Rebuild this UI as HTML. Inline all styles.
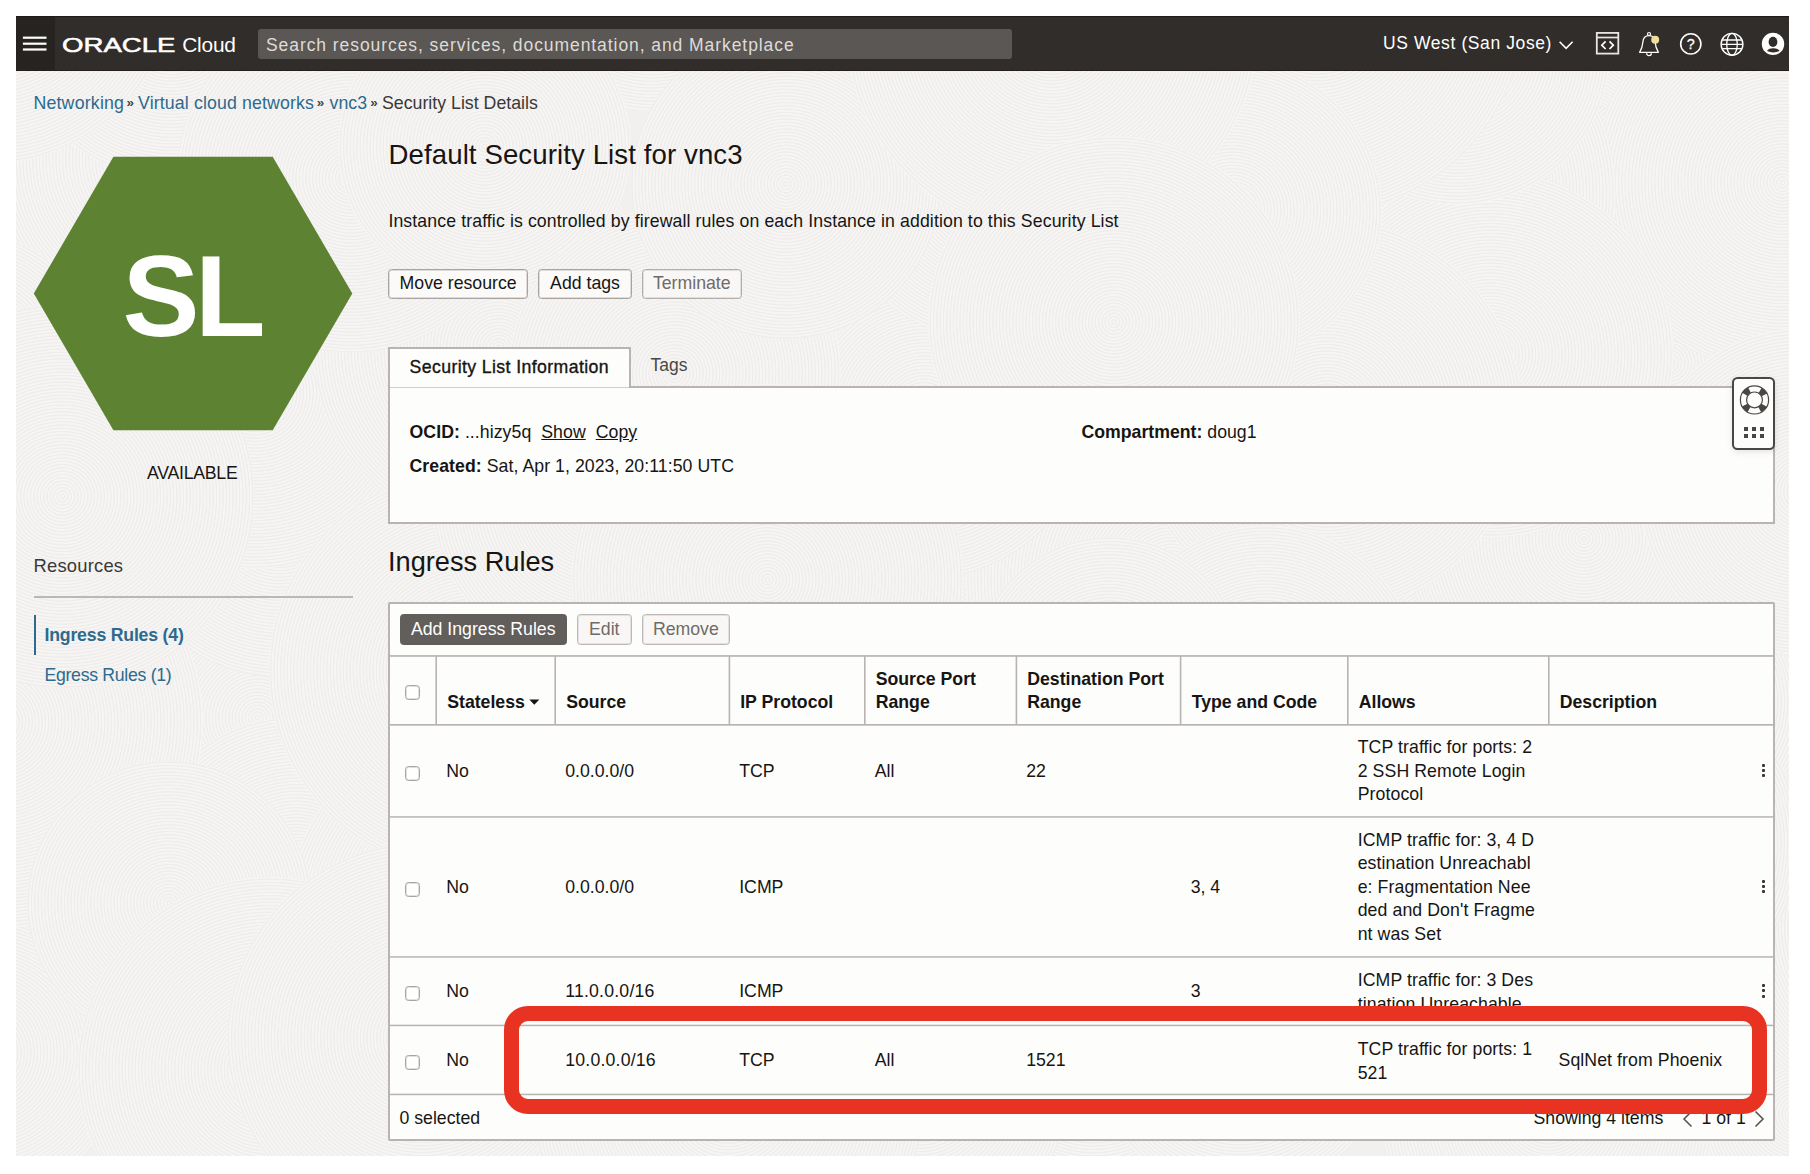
<!DOCTYPE html>
<html lang="en"><head><meta charset="utf-8"><title>Security List Details</title>
<style>
html,body{margin:0;padding:0;background:#fff}
body{width:1810px;height:1174px;position:relative;overflow:hidden;font-family:"Liberation Sans",Arial,sans-serif}
.t{position:absolute;line-height:1;white-space:nowrap}
.r{position:absolute}
b{font-weight:700}
.d{position:absolute;border-radius:50%;background:repeating-radial-gradient(circle at 50% 50%, rgba(255,255,255,.36) 0, rgba(255,255,255,.36) 1.2px, rgba(0,0,0,.012) 1.9px, rgba(0,0,0,.012) 2.6px, rgba(255,255,255,.36) 3.3px) #f1f0ee}
</style></head><body>
<div class="r " style="left:16px;top:16px;width:1773px;height:1140px;background:#f1f0ee;overflow:hidden"><div class="d" style="left:-32px;top:-33px;width:353px;height:353px"></div><div class="d" style="left:498px;top:-180px;width:275px;height:275px"></div><div class="d" style="left:1429px;top:-55px;width:417px;height:417px"></div><div class="d" style="left:1193px;top:344px;width:297px;height:297px"></div><div class="d" style="left:707px;top:552px;width:277px;height:277px"></div><div class="d" style="left:-177px;top:893px;width:287px;height:287px"></div><div class="d" style="left:1300px;top:508px;width:284px;height:284px"></div><div class="d" style="left:945px;top:903px;width:265px;height:265px"></div><div class="d" style="left:235px;top:-132px;width:266px;height:266px"></div><div class="d" style="left:1516px;top:-193px;width:309px;height:309px"></div><div class="d" style="left:-4px;top:-156px;width:319px;height:319px"></div><div class="d" style="left:848px;top:340px;width:326px;height:326px"></div><div class="d" style="left:62px;top:522px;width:359px;height:359px"></div><div class="d" style="left:121px;top:701px;width:318px;height:318px"></div><div class="d" style="left:1532px;top:554px;width:264px;height:264px"></div><div class="d" style="left:102px;top:338px;width:323px;height:323px"></div><div class="d" style="left:1510px;top:203px;width:287px;height:287px"></div><div class="d" style="left:1576px;top:-24px;width:381px;height:381px"></div><div class="d" style="left:1575px;top:892px;width:413px;height:413px"></div><div class="d" style="left:1311px;top:736px;width:283px;height:283px"></div><div class="d" style="left:1200px;top:-22px;width:400px;height:400px"></div><div class="d" style="left:268px;top:700px;width:419px;height:419px"></div><div class="d" style="left:63px;top:201px;width:352px;height:352px"></div><div class="d" style="left:253px;top:453px;width:404px;height:404px"></div><div class="d" style="left:297px;top:146px;width:371px;height:371px"></div><div class="d" style="left:756px;top:926px;width:296px;height:296px"></div><div class="d" style="left:-182px;top:216px;width:266px;height:266px"></div><div class="d" style="left:1391px;top:346px;width:354px;height:354px"></div><div class="d" style="left:1089px;top:709px;width:264px;height:264px"></div><div class="d" style="left:710px;top:-107px;width:280px;height:280px"></div><div class="d" style="left:949px;top:357px;width:413px;height:413px"></div><div class="d" style="left:161px;top:-12px;width:348px;height:348px"></div><div class="d" style="left:-225px;top:500px;width:412px;height:412px"></div><div class="d" style="left:1623px;top:312px;width:327px;height:327px"></div><div class="d" style="left:416px;top:317px;width:332px;height:332px"></div><div class="d" style="left:1291px;top:155px;width:367px;height:367px"></div><div class="d" style="left:11px;top:745px;width:284px;height:284px"></div><div class="d" style="left:61px;top:861px;width:385px;height:385px"></div><div class="d" style="left:-145px;top:289px;width:383px;height:383px"></div><div class="d" style="left:322px;top:-16px;width:293px;height:293px"></div><div class="d" style="left:753px;top:708px;width:302px;height:302px"></div><div class="d" style="left:211px;top:827px;width:390px;height:390px"></div><div class="d" style="left:1115px;top:204px;width:392px;height:392px"></div><div class="d" style="left:1288px;top:-117px;width:306px;height:306px"></div><div class="d" style="left:1092px;top:509px;width:314px;height:314px"></div><div class="d" style="left:1366px;top:930px;width:332px;height:332px"></div><div class="d" style="left:603px;top:737px;width:274px;height:274px"></div><div class="d" style="left:740px;top:227px;width:336px;height:336px"></div><div class="d" style="left:958px;top:521px;width:271px;height:271px"></div><div class="d" style="left:1701px;top:726px;width:371px;height:371px"></div><div class="d" style="left:-207px;top:-217px;width:364px;height:364px"></div><div class="d" style="left:1439px;top:655px;width:344px;height:344px"></div><div class="d" style="left:490px;top:544px;width:388px;height:388px"></div><div class="d" style="left:518px;top:891px;width:389px;height:389px"></div><div class="d" style="left:818px;top:16px;width:308px;height:308px"></div><div class="d" style="left:492px;top:191px;width:333px;height:333px"></div><div class="d" style="left:615px;top:13px;width:310px;height:310px"></div><div class="d" style="left:556px;top:368px;width:391px;height:391px"></div><div class="d" style="left:1073px;top:877px;width:301px;height:301px"></div><div class="d" style="left:1093px;top:-218px;width:416px;height:416px"></div><div class="d" style="left:1067px;top:45px;width:299px;height:299px"></div><div class="d" style="left:830px;top:-193px;width:412px;height:412px"></div><div class="d" style="left:912px;top:120px;width:372px;height:372px"></div></div>
<div class="r " style="left:16px;top:16px;width:1773px;height:55px;background:#312d2a;border-top:1px solid #1d1b19;border-bottom:1px solid #221f1d;box-sizing:border-box"></div>
<div class="r " style="left:16px;top:17px;width:39px;height:53px;background:#262320"></div>
<svg class="r" style="left:16px;top:16px" width="40" height="55" viewBox="0 0 40 55"><g fill="#fff"><rect x="6.9" y="20.6" width="23.6" height="2.2"/><rect x="6.9" y="26.6" width="23.6" height="2.2"/><rect x="6.9" y="32.4" width="23.6" height="2.2"/></g></svg>
<div class="t " style="left:62.30px;top:35.00px;font-size:20.6px;color:#fff;letter-spacing:0px;transform:translateY(0.4px) scaleX(1.34);transform-origin:0 0;font-weight:400;-webkit-text-stroke:0.55px #fff">ORACLE</div>
<div class="t " style="left:182.20px;top:35.00px;font-size:20.9px;color:#fff;letter-spacing:-0.2px">Cloud</div>
<div class="r " style="left:258px;top:29px;width:754px;height:30px;background:#5b5754;border-radius:3px"></div>
<div class="t " style="left:266.00px;top:37.00px;font-size:17.5px;color:#dedbd8;letter-spacing:0.93px">Search resources, services, documentation, and Marketplace</div>
<div class="t " style="left:1383.00px;top:35.00px;font-size:17.5px;color:#fff;letter-spacing:0.6px">US West (San Jose)</div>
<div class="t " style="left:33.40px;top:95.00px;font-size:17.75px;color:#2d6a8e;letter-spacing:0.2px">Networking</div>
<div class="t " style="left:126.60px;top:96.00px;font-size:13.5px;color:#444;font-weight:700">»</div>
<div class="t " style="left:138.00px;top:95.00px;font-size:17.75px;color:#2d6a8e;letter-spacing:0.12px">Virtual cloud networks</div>
<div class="t " style="left:316.80px;top:96.00px;font-size:13.5px;color:#444;font-weight:700">»</div>
<div class="t " style="left:329.60px;top:95.00px;font-size:17.75px;color:#2d6a8e">vnc3</div>
<div class="t " style="left:370.20px;top:96.00px;font-size:13.5px;color:#444;font-weight:700">»</div>
<div class="t " style="left:382.00px;top:95.00px;font-size:17.75px;color:#3a3836">Security List Details</div>
<svg class="r" style="left:33px;top:156px" width="321" height="276" viewBox="0 0 321 276"><polygon points="0.8,137.5 80.4,0.8 239.7,0.8 319.3,137.5 239.7,274.2 80.4,274.2" fill="#5c8232"/></svg>
<div class="t " style="left:122.50px;top:238.00px;font-size:115.5px;color:#fff;font-weight:700;letter-spacing:-4.5px">SL</div>
<div class="t " style="left:147.00px;top:465.00px;font-size:17.7px;color:#161513;letter-spacing:-0.25px">AVAILABLE</div>
<div class="t " style="left:388.50px;top:141.00px;font-size:27.6px;color:#161513;letter-spacing:0.1px">Default Security List for vnc3</div>
<div class="t " style="left:388.40px;top:213.00px;font-size:17.7px;color:#161513;letter-spacing:0.11px">Instance traffic is controlled by firewall rules on each Instance in addition to this Security List</div>
<div class="r " style="left:388.2px;top:269px;width:139.8px;height:29.8px;background:#fbfaf9;border:1px solid #a9a39f;border-radius:3.5px;box-sizing:border-box;box-shadow:inset 0 0 0 1px #a9a39f55"></div>
<div class="t" style="left:388.2px;top:269px;width:139.8px;height:29.8px;line-height:29.400000000000002px;text-align:center;font-size:17.7px;color:#161513">Move resource</div>
<div class="r " style="left:537.6px;top:269px;width:94.8px;height:29.8px;background:#fbfaf9;border:1px solid #a9a39f;border-radius:3.5px;box-sizing:border-box;box-shadow:inset 0 0 0 1px #a9a39f55"></div>
<div class="t" style="left:537.6px;top:269px;width:94.8px;height:29.8px;line-height:29.400000000000002px;text-align:center;font-size:17.7px;color:#161513">Add tags</div>
<div class="r " style="left:642px;top:269px;width:99.5px;height:29.8px;background:#f8f7f6;border:1px solid #b3aeab;border-radius:3.5px;box-sizing:border-box;box-shadow:inset 0 0 0 1px #b3aeab55"></div>
<div class="t" style="left:642px;top:269px;width:99.5px;height:29.8px;line-height:29.400000000000002px;text-align:center;font-size:17.7px;color:#6f6b68">Terminate</div>
<div class="r " style="left:388px;top:386px;width:1387px;height:138px;background:#fdfdfc;border:2px solid #b9b4b1;box-sizing:border-box"></div>
<div class="r " style="left:388px;top:347px;width:243px;height:41px;background:#fdfdfc;border:2px solid #b9b4b1;border-bottom:none;box-sizing:border-box"></div>
<div class="t " style="left:409.50px;top:359.00px;font-size:17.7px;color:#161513;-webkit-text-stroke:0.35px #161513;letter-spacing:0.39px">Security List Information</div>
<div class="r " style="left:390px;top:387px;width:239px;height:1px;background:#d2cecb"></div>
<div class="t " style="left:650.50px;top:357.00px;font-size:17.5px;color:#4a4745">Tags</div>
<div class="t " style="left:409.50px;top:424.00px;font-size:17.7px;color:#161513;letter-spacing:0.06px"><b>OCID:</b> ...hizy5q&nbsp; <u>Show</u>&nbsp; <u>Copy</u></div>
<div class="t " style="left:409.50px;top:458.00px;font-size:17.7px;color:#161513;letter-spacing:0.06px"><b>Created:</b> Sat, Apr 1, 2023, 20:11:50 UTC</div>
<div class="t " style="left:1081.50px;top:424.00px;font-size:17.7px;color:#161513"><b>Compartment:</b> doug1</div>
<div class="r " style="left:1732px;top:377px;width:43px;height:72.8px;background:#fdfdfc;border:2.1px solid #4a4644;border-radius:5.5px;box-sizing:border-box;box-shadow:0 2px 6px rgba(0,0,0,.10)"></div>
<svg class="r" style="left:1738px;top:384px" width="34" height="34" viewBox="0 0 34 34" fill="none" stroke="#4a4644">
<circle cx="16.5" cy="15.9" r="11.05" stroke-width="6.1" stroke-dasharray="6.2 11.157" stroke-dashoffset="-5.58"/>
<circle cx="16.5" cy="15.9" r="14.1" stroke-width="1.2"/>
<circle cx="16.5" cy="15.9" r="7.9" stroke-width="1.2"/>
</svg>
<div class="r " style="left:1744.0px;top:426.6px;width:4px;height:4px;background:#4a4644"></div>
<div class="r " style="left:1751.85px;top:426.6px;width:4px;height:4px;background:#4a4644"></div>
<div class="r " style="left:1759.7px;top:426.6px;width:4px;height:4px;background:#4a4644"></div>
<div class="r " style="left:1744.0px;top:434.40000000000003px;width:4px;height:4px;background:#4a4644"></div>
<div class="r " style="left:1751.85px;top:434.40000000000003px;width:4px;height:4px;background:#4a4644"></div>
<div class="r " style="left:1759.7px;top:434.40000000000003px;width:4px;height:4px;background:#4a4644"></div>
<div class="t " style="left:33.50px;top:557.00px;font-size:18.4px;color:#3a3836;letter-spacing:0.2px">Resources</div>
<div class="r " style="left:34px;top:596px;width:318.5px;height:2px;background:#bcb7b4"></div>
<div class="r " style="left:34px;top:615px;width:2.4px;height:39.5px;background:#2d6a8e"></div>
<div class="t " style="left:44.50px;top:627.00px;font-size:17.7px;color:#2d6a8e;font-weight:700;letter-spacing:-0.2px">Ingress Rules (4)</div>
<div class="t " style="left:44.50px;top:667.00px;font-size:17.7px;color:#2d6a8e;letter-spacing:-0.3px">Egress Rules (1)</div>
<div class="t " style="left:388.00px;top:548.00px;font-size:27.2px;color:#161513">Ingress Rules</div>
<div class="r " style="left:388px;top:602px;width:1387px;height:539px;background:#fdfdfc;border:2px solid #b9b4b1;box-sizing:border-box;border-radius:2px"></div>
<div class="r " style="left:399.5px;top:614px;width:167.5px;height:30.5px;background:#625e5b;border:1px solid #625e5b;border-radius:3.5px;box-sizing:border-box;box-shadow:inset 0 0 0 1px #625e5b55"></div>
<div class="t" style="left:399.5px;top:614px;width:167.5px;height:30.5px;line-height:30.1px;text-align:center;font-size:17.7px;color:#fff">Add Ingress Rules</div>
<div class="r " style="left:577px;top:614px;width:54.5px;height:30.5px;background:#f8f7f6;border:1px solid #bdb8b5;border-radius:3.5px;box-sizing:border-box;box-shadow:inset 0 0 0 1px #bdb8b555"></div>
<div class="t" style="left:577px;top:614px;width:54.5px;height:30.5px;line-height:30.1px;text-align:center;font-size:17.7px;color:#6f6b68">Edit</div>
<div class="r " style="left:642px;top:614px;width:87.7px;height:30.5px;background:#f8f7f6;border:1px solid #bdb8b5;border-radius:3.5px;box-sizing:border-box;box-shadow:inset 0 0 0 1px #bdb8b555"></div>
<div class="t" style="left:642px;top:614px;width:87.7px;height:30.5px;line-height:30.1px;text-align:center;font-size:17.7px;color:#6f6b68">Remove</div>
<svg class="r" style="left:388px;top:602px" width="1387" height="539" viewBox="388 602 1387 539" fill="#b9b4b1"><rect x="390" y="655.1" width="1383" height="1.7"/><rect x="390" y="724" width="1383" height="1.7"/><rect x="435.4" y="656" width="1.6" height="68.5"/><rect x="554.4" y="656" width="1.6" height="68.5"/><rect x="728.6" y="656" width="1.6" height="68.5"/><rect x="864" y="656" width="1.6" height="68.5"/><rect x="1015.6" y="656" width="1.6" height="68.5"/><rect x="1179.8" y="656" width="1.6" height="68.5"/><rect x="1347" y="656" width="1.6" height="68.5"/><rect x="1548" y="656" width="1.6" height="68.5"/><rect x="390" y="816.2" width="1383" height="1.5"/><rect x="390" y="956.2" width="1383" height="1.5"/><rect x="390" y="1024.7" width="1383" height="1.5"/><rect x="390" y="1093.7" width="1383" height="1.5"/></svg>
<div class="r " style="left:404.5px;top:684.5px;width:15.5px;height:15.2px;background:#fff;border:1px solid #aaa5a1;border-radius:3.5px;box-sizing:border-box;box-shadow:inset 0 0 0 1px #aaa5a155"></div>
<div class="r " style="left:404.5px;top:765.5px;width:15.5px;height:15.2px;background:#fff;border:1px solid #aaa5a1;border-radius:3.5px;box-sizing:border-box;box-shadow:inset 0 0 0 1px #aaa5a155"></div>
<div class="r " style="left:404.5px;top:881.5px;width:15.5px;height:15.2px;background:#fff;border:1px solid #aaa5a1;border-radius:3.5px;box-sizing:border-box;box-shadow:inset 0 0 0 1px #aaa5a155"></div>
<div class="r " style="left:404.5px;top:986px;width:15.5px;height:15.2px;background:#fff;border:1px solid #aaa5a1;border-radius:3.5px;box-sizing:border-box;box-shadow:inset 0 0 0 1px #aaa5a155"></div>
<div class="r " style="left:404.5px;top:1054.5px;width:15.5px;height:15.2px;background:#fff;border:1px solid #aaa5a1;border-radius:3.5px;box-sizing:border-box;box-shadow:inset 0 0 0 1px #aaa5a155"></div>
<div class="t " style="left:447.20px;top:694.00px;font-size:17.7px;font-weight:700;color:#161513">Stateless</div>
<svg class="r" style="left:529px;top:698.5px" width="11" height="7" viewBox="0 0 11 7"><path d="M0.3 0.6 H10.3 L5.3 5.8Z" fill="#161513"/></svg>
<div class="t " style="left:566.20px;top:694.00px;font-size:17.7px;font-weight:700;color:#161513">Source</div>
<div class="t " style="left:740.20px;top:694.00px;font-size:17.7px;font-weight:700;color:#161513">IP Protocol</div>
<div class="t " style="left:875.70px;top:671.00px;font-size:17.7px;font-weight:700;color:#161513">Source Port</div>
<div class="t " style="left:875.70px;top:694.00px;font-size:17.7px;font-weight:700;color:#161513">Range</div>
<div class="t " style="left:1027.20px;top:671.00px;font-size:17.7px;font-weight:700;color:#161513">Destination Port</div>
<div class="t " style="left:1027.20px;top:694.00px;font-size:17.7px;font-weight:700;color:#161513">Range</div>
<div class="t " style="left:1191.70px;top:694.00px;font-size:17.7px;font-weight:700;color:#161513">Type and Code</div>
<div class="t " style="left:1358.70px;top:694.00px;font-size:17.7px;font-weight:700;color:#161513">Allows</div>
<div class="t " style="left:1559.70px;top:694.00px;font-size:17.7px;font-weight:700;color:#161513">Description</div>
<div class="t " style="left:446.20px;top:763.00px;font-size:17.7px;color:#161513">No</div>
<div class="t " style="left:565.20px;top:763.00px;font-size:17.7px;color:#161513">0.0.0.0/0</div>
<div class="t " style="left:739.20px;top:763.00px;font-size:17.7px;color:#161513">TCP</div>
<div class="t " style="left:874.70px;top:763.00px;font-size:17.7px;color:#161513">All</div>
<div class="t " style="left:1026.20px;top:763.00px;font-size:17.7px;color:#161513">22</div>
<div class="t " style="left:1357.70px;top:739.00px;font-size:17.7px;color:#161513;letter-spacing:0.09px">TCP traffic for ports: 2</div>
<div class="t " style="left:1357.70px;top:763.00px;font-size:17.7px;color:#161513;letter-spacing:0.09px">2 SSH Remote Login</div>
<div class="t " style="left:1357.70px;top:786.00px;font-size:17.7px;color:#161513;letter-spacing:0.09px">Protocol</div>
<div class="r " style="left:1762.4px;top:763.6px;width:3px;height:3px;background:#3a3634;border-radius:1px"></div>
<div class="r " style="left:1762.4px;top:768.9px;width:3px;height:3px;background:#3a3634;border-radius:1px"></div>
<div class="r " style="left:1762.4px;top:774.1999999999999px;width:3px;height:3px;background:#3a3634;border-radius:1px"></div>
<div class="t " style="left:446.20px;top:879.00px;font-size:17.7px;color:#161513">No</div>
<div class="t " style="left:565.20px;top:879.00px;font-size:17.7px;color:#161513">0.0.0.0/0</div>
<div class="t " style="left:739.20px;top:879.00px;font-size:17.7px;color:#161513">ICMP</div>
<div class="t " style="left:1190.70px;top:879.00px;font-size:17.7px;color:#161513">3, 4</div>
<div class="t " style="left:1357.70px;top:832.00px;font-size:17.7px;color:#161513;letter-spacing:0.09px">ICMP traffic for: 3, 4 D</div>
<div class="t " style="left:1357.70px;top:855.00px;font-size:17.7px;color:#161513;letter-spacing:0.09px">estination Unreachabl</div>
<div class="t " style="left:1357.70px;top:879.00px;font-size:17.7px;color:#161513;letter-spacing:0.09px">e: Fragmentation Nee</div>
<div class="t " style="left:1357.70px;top:902.00px;font-size:17.7px;color:#161513;letter-spacing:0.09px">ded and Don't Fragme</div>
<div class="t " style="left:1357.70px;top:926.00px;font-size:17.7px;color:#161513;letter-spacing:0.09px">nt was Set</div>
<div class="r " style="left:1762.4px;top:879.6px;width:3px;height:3px;background:#3a3634;border-radius:1px"></div>
<div class="r " style="left:1762.4px;top:884.9px;width:3px;height:3px;background:#3a3634;border-radius:1px"></div>
<div class="r " style="left:1762.4px;top:890.1999999999999px;width:3px;height:3px;background:#3a3634;border-radius:1px"></div>
<div class="t " style="left:446.20px;top:983.00px;font-size:17.7px;color:#161513">No</div>
<div class="t " style="left:565.20px;top:983.00px;font-size:17.7px;color:#161513"><span style='letter-spacing:0.2px'>11.0.0.0/16</span></div>
<div class="t " style="left:739.20px;top:983.00px;font-size:17.7px;color:#161513">ICMP</div>
<div class="t " style="left:1190.70px;top:983.00px;font-size:17.7px;color:#161513">3</div>
<div class="t " style="left:1357.70px;top:972.00px;font-size:17.7px;color:#161513;letter-spacing:0.09px">ICMP traffic for: 3 Des</div>
<div class="t " style="left:1357.70px;top:996.00px;font-size:17.7px;color:#161513;letter-spacing:0.09px">tination Unreachable</div>
<div class="r " style="left:1762.4px;top:984.1px;width:3px;height:3px;background:#3a3634;border-radius:1px"></div>
<div class="r " style="left:1762.4px;top:989.4px;width:3px;height:3px;background:#3a3634;border-radius:1px"></div>
<div class="r " style="left:1762.4px;top:994.6999999999999px;width:3px;height:3px;background:#3a3634;border-radius:1px"></div>
<div class="t " style="left:446.20px;top:1052.00px;font-size:17.7px;color:#161513">No</div>
<div class="t " style="left:565.20px;top:1052.00px;font-size:17.7px;color:#161513"><span style='letter-spacing:0.2px'>10.0.0.0/16</span></div>
<div class="t " style="left:739.20px;top:1052.00px;font-size:17.7px;color:#161513">TCP</div>
<div class="t " style="left:874.70px;top:1052.00px;font-size:17.7px;color:#161513">All</div>
<div class="t " style="left:1026.20px;top:1052.00px;font-size:17.7px;color:#161513">1521</div>
<div class="t " style="left:1357.70px;top:1041.00px;font-size:17.7px;color:#161513;letter-spacing:0.09px">TCP traffic for ports: 1</div>
<div class="t " style="left:1357.70px;top:1065.00px;font-size:17.7px;color:#161513;letter-spacing:0.09px">521</div>
<div class="t " style="left:1558.50px;top:1052.00px;font-size:17.7px;color:#161513;letter-spacing:0.08px">SqlNet from Phoenix</div>
<div class="t " style="left:399.50px;top:1110.00px;font-size:17.7px;color:#161513">0 selected</div>
<div class="t " style="left:1533.50px;top:1110.00px;font-size:17.7px;color:#161513">Showing 4 items</div>
<div class="t " style="left:1701.50px;top:1110.00px;font-size:17.7px;color:#161513">1 of 1</div>
<svg class="r" style="left:1682px;top:1110px" width="12" height="18" viewBox="0 0 12 18"><path d="M9.5 1.5 L2 9 L9.5 16.5" fill="none" stroke="#5a5552" stroke-width="1.6"/></svg>
<svg class="r" style="left:1753px;top:1110px" width="12" height="18" viewBox="0 0 12 18"><path d="M2.5 1.5 L10 9 L2.5 16.5" fill="none" stroke="#5a5552" stroke-width="1.6"/></svg>
<div class="r " style="left:503.5px;top:1006px;width:1263.5px;height:107.7px;border:15.4px solid #e83222;border-radius:24px;box-sizing:border-box"></div>
<svg class="r" style="left:1556px;top:26px" width="236" height="36" viewBox="0 0 236 36" fill="none" stroke="#fff" stroke-width="1.7">
<path d="M3.6 15.8 L10.1 22.3 L16.6 15.8" stroke-width="1.6"/>
<rect x="40.8" y="6.9" width="21.5" height="20.7" stroke="#e8e6e4" stroke-width="1.8"/>
<path d="M40.8 11.5 H62.3" stroke="#e8e6e4" stroke-width="1.7"/>
<path d="M49.6 15.4 L45.8 19.2 L49.6 23 M53.5 15.4 L57.3 19.2 L53.5 23" stroke-width="1.7"/>
<path d="M83.6 26.3 C85.8 23 86.6 19.5 86.9 16 C87.2 11.8 89.5 9.6 93 9.6 C96.5 9.6 98.8 11.8 99.1 16 C99.4 19.5 100.2 23 102.4 26.3 Z" stroke-width="1.3" stroke-linejoin="round"/>
<circle cx="93" cy="8" r="1.5" stroke-width="1.2"/>
<path d="M90.6 27.2 A2.4 2.4 0 0 0 95.4 27.2" stroke-width="1.3"/>
<circle cx="99.2" cy="13.8" r="4" fill="#f0dc9b" stroke="none"/>
<circle cx="134.8" cy="17.9" r="10.1" stroke-width="1.6"/>
<circle cx="176" cy="18.3" r="10.9" stroke-width="1.4"/>
<ellipse cx="176" cy="18.3" rx="5.3" ry="10.9" stroke-width="1.3"/>
<path d="M165.1 18.3 H186.9 M166.2 14 H185.8 M166.2 22.6 H185.8" stroke-width="1.3"/>
<circle cx="217" cy="17.9" r="11.2" fill="#fff" stroke="none"/>
<ellipse cx="217" cy="15.9" rx="4.4" ry="5.1" fill="#312d2a" stroke="none"/>
<path d="M211 25.1 Q212 22.5 217.2 22.3 Q222.6 22.5 223.6 25.1 Q220.5 26.5 217.3 26.5 Q214 26.5 211 25.1 Z" fill="#312d2a" stroke="none"/>
</svg>
<div class="t " style="left:1686.80px;top:37.00px;font-size:14.3px;color:#fff;font-weight:400;-webkit-text-stroke:0.3px #fff">?</div>
</body></html>
